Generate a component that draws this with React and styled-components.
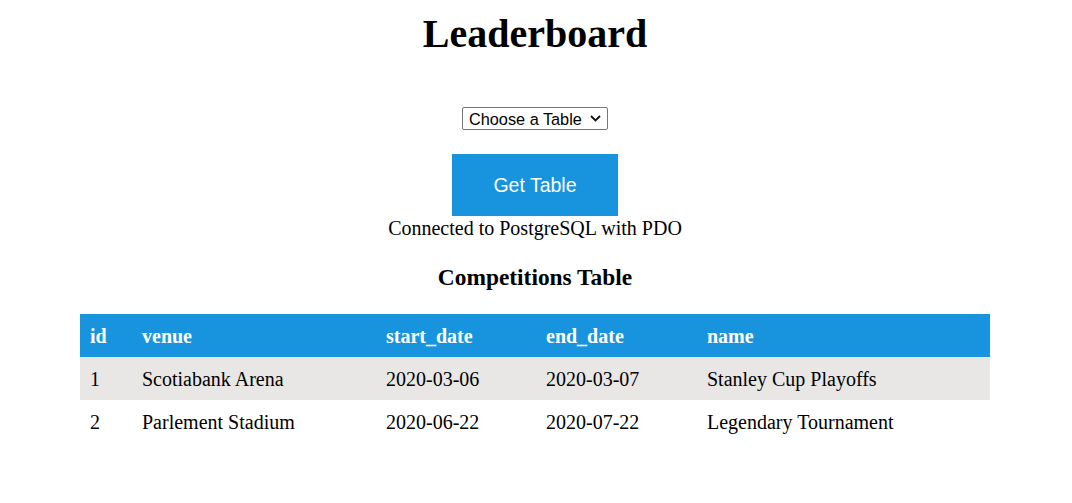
import React from "react";
import styled, { createGlobalStyle } from "styled-components";

const GlobalStyle = createGlobalStyle`
  body {
    margin: 0;
    font-family: "Liberation Serif", "Times New Roman", serif;
    font-size: 20px;
    color: #000;
    background: #fff;
  }
`;

const columns = [
  { key: "id", width: 52 },
  { key: "venue", width: 244 },
  { key: "start_date", width: 160 },
  { key: "end_date", width: 161 },
  { key: "name", width: 293 },
];

const rows = [
  { id: 1, venue: "Scotiabank Arena", start_date: "2020-03-06", end_date: "2020-03-07", name: "Stanley Cup Playoffs" },
  { id: 2, venue: "Parlement Stadium", start_date: "2020-06-22", end_date: "2020-07-22", name: "Legendary Tournament" },
];

function App() {
  return (
    <Page>
      <GlobalStyle />
      <Title>Leaderboard</Title>
      <Form>
        <SelectWrap>
          <TableSelect defaultValue="">
            <option value="">Choose a Table</option>
            <option value="competitions">Competitions</option>
            <option value="players">Players</option>
          </TableSelect>
          <Chevron width="11" height="7" viewBox="0 0 11 7">
            <path d="M1 1l4.5 4.5L10 1" fill="none" stroke="#111" strokeWidth="1.8" />
          </Chevron>
        </SelectWrap>
        <GetButton type="button">Get Table</GetButton>
      </Form>
      <Status>Connected to PostgreSQL with PDO</Status>
      <TableTitle>Competitions Table</TableTitle>
      <DataTable>
        <colgroup>
          {columns.map((col) => (
            <col key={col.key} style={{ width: col.width }} />
          ))}
        </colgroup>
        <thead>
          <tr>
            {columns.map((col) => (
              <HeadCell key={col.key}>{col.key}</HeadCell>
            ))}
          </tr>
        </thead>
        <tbody>
          {rows.map((row, index) => (
            <Row key={row.id} $striped={index % 2 === 0}>
              {columns.map((col) => (
                <Cell key={col.key}>{row[col.key]}</Cell>
              ))}
            </Row>
          ))}
        </tbody>
      </DataTable>
    </Page>
  );
}

const Page = styled.div`
  display: flex;
  flex-direction: column;
  align-items: center;
  padding-right: 2px;
`;

const Title = styled.h1`
  font-size: 40px;
  font-weight: bold;
  line-height: 44px;
  margin: 12px 0 0;
`;

const Form = styled.form`
  display: flex;
  flex-direction: column;
  align-items: center;
  margin-top: 51px;
`;

const SelectWrap = styled.div`
  position: relative;
  display: flex;
`;

const TableSelect = styled.select`
  appearance: none;
  font-family: "Liberation Sans", Arial, sans-serif;
  font-size: 16.3px;
  height: 23px;
  width: 146px;
  padding: 0 0 0 6px;
  border: 1px solid #767676;
  border-radius: 2px;
  background: #fff;
  color: #000;
`;

const Chevron = styled.svg`
  position: absolute;
  right: 7px;
  top: 8px;
  pointer-events: none;
`;

const GetButton = styled.button`
  margin-top: 24px;
  width: 166px;
  height: 62px;
  border: none;
  background: #1894df;
  color: #fff;
  font-family: "Liberation Sans", Arial, sans-serif;
  font-size: 19.5px;
  cursor: pointer;
`;

const Status = styled.p`
  margin: 0;
  padding-top: 1px;
  line-height: 23px;
`;

const TableTitle = styled.h3`
  font-size: 23.4px;
  line-height: 26px;
  margin: 24px 0 24px;
`;

const DataTable = styled.table`
  width: 910px;
  border-collapse: collapse;
  table-layout: fixed;
`;

const HeadCell = styled.th`
  background: #1894df;
  color: #fff;
  text-align: left;
  font-weight: bold;
  padding: 11px 10px 9px;
  line-height: 23px;
`;

const Row = styled.tr`
  background: ${(p) => (p.$striped ? "#e8e7e5" : "#fff")};
`;

const Cell = styled.td`
  padding: 11px 10px 9px;
  line-height: 23px;
`;

export default App;
